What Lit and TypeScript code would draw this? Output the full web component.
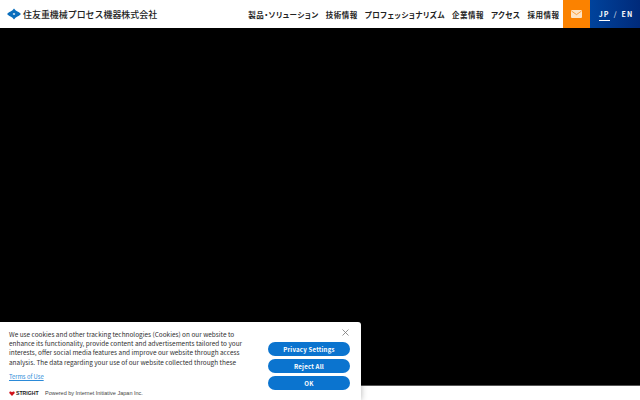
import { LitElement, html, css } from "lit";
import { customElement } from "lit/decorators.js";

const NAV = ["製品・ソリューション", "技術情報", "プロフェッショナリズム", "企業情報", "アクセス", "採用情報"];

@customElement("app-root")
export class AppRoot extends LitElement {
  static styles = css`
    :host { display: block; position: relative; width: 640px; height: 400px; overflow: hidden; background: #fff;
      font-family: "Noto Sans CJK JP", "Noto Sans", sans-serif; }
    .page { display: flex; flex-direction: column; height: 400px; }
    header { height: 28px; display: flex; align-items: center; background: #fff; flex: none; }
    .logo { display: flex; align-items: center; gap: 2px; padding-left: 7px; }
    .logo svg { display: block; }
    .logo span { font-size: 8.95px; font-weight: 500; color: #222; white-space: nowrap; }
    nav { margin-left: auto; display: flex; gap: 7px; padding-right: 3.5px; }
    nav span { font-size: 7.5px; font-weight: 700; color: #222; letter-spacing: 0.5px; font-feature-settings: "palt"; white-space: nowrap; }
    .mail { width: 27px; height: 28px; background: #fb8200; display: flex; align-items: center; justify-content: center; }
    .lang { width: 50px; height: 28px; padding-left: 2px; box-sizing: border-box; background: linear-gradient(90deg, #00439c, #002a7a); color: #fff;
      display: flex; align-items: center; justify-content: center; gap: 4px; font-size: 7px; font-weight: 700; letter-spacing: 1.1px; }
    .lang .jp { border-bottom: 1px solid #fff; line-height: 10px; padding-bottom: 1px; margin-top: 1px; }
    .lang .en { margin-bottom: 1px; }
    .lang .sl { font-weight: 400; margin-bottom: 1px; }
    .hero { height: 358px; background: #000; flex: none; }
    .rest { flex: 1; border-top: 1px solid #555; margin-top: -1px; background: #fff; }
    .cookie { position: absolute; left: 0; top: 322px; width: 361px; height: 78px; background: #fff;
      box-shadow: 0 0 6px rgba(0,0,0,.3); border-top-right-radius: 3px; display: flex; }
    .left { width: 258px; padding: 8px 0 0 9px; box-sizing: border-box; flex: none; }
    .left p { margin: 0; font-size: 6.44px; line-height: 9.2px; font-weight: 400; color: #333; white-space: pre; height: 37px; }
    .terms { display: block; margin-top: 5px; font-size: 5.8px; line-height: 9px; color: #2b8ad8; text-decoration: underline; }
    .brand { display: flex; align-items: center; margin-top: 8px; height: 8px; }
    .brand svg { display: block; margin-right: 1px; }
    .stright { font-family: "Liberation Sans", sans-serif; font-size: 5.15px; font-weight: 700; color: #222; width: 29px; }
    .powered { font-family: "Liberation Sans", sans-serif; font-size: 5.5px; color: #444; white-space: nowrap; }
    .right { position: relative; flex: 1; display: flex; flex-direction: column; gap: 3px; padding: 20px 11px 0 10px; }
    .btn { height: 14px; border-radius: 7px; background: #0b74cf; color: #fff; font-size: 6.1px; font-weight: 700;
      display: flex; align-items: center; justify-content: center; letter-spacing: 0.2px; }
    .close { position: absolute; top: 7px; right: 12px; display: block; }
  `;

  render() {
    return html`
      <div class="page">
        <header>
          <div class="logo">
            <svg width="14" height="12" viewBox="0 0 14 12">
              <path d="M7 0.5 Q8.5 2.6 10 3.2 Q12 4 14 6 Q12 8 10 8.8 Q8.5 9.4 7 11.5 Q5.5 9.4 4 8.8 Q2 8 0 6 Q2 4 4 3.2 Q5.5 2.6 7 0.5 Z" fill="#0a6ebd"/>
              <path d="M5.6 6 L7 5 L8.4 6 L7 7 Z" fill="#fff"/>
            </svg>
            <span>住友重機械プロセス機器株式会社</span>
          </div>
          <nav>${NAV.map((n) => html`<span>${n}</span>`)}</nav>
          <div class="mail">
            <svg width="11" height="8" viewBox="0 0 11 8">
              <rect width="11" height="8" rx="1" fill="#fde3c4"/>
              <path d="M0.5 1 L5.5 4.6 L10.5 1" fill="none" stroke="#fb8200" stroke-width="0.7"/>
            </svg>
          </div>
          <div class="lang"><span class="jp">JP</span><span class="sl">/</span><span class="en">EN</span></div>
        </header>
        <div class="hero"></div>
        <div class="rest"></div>
      </div>
      <div class="cookie">
        <div class="left">
          <p>We use cookies and other tracking technologies (Cookies) on our website to
enhance its functionality, provide content and advertisements tailored to your
interests, offer social media features and improve our website through access
analysis. The data regarding your use of our website collected through these</p>
          <span class="terms">Terms of Use</span>
          <div class="brand">
            <svg width="6" height="5" viewBox="0 0 7 6"><path d="M3.5 6 L0.4 2.6 C-0.4 1 1.8 -0.6 3.5 1.4 C5.2 -0.6 7.4 1 6.6 2.6 Z" fill="#d0121b"/></svg>
            <span class="stright">STRIGHT</span>
            <span class="powered">Powered by Internet Initiative Japan Inc.</span>
          </div>
        </div>
        <div class="right">
          <svg class="close" width="7" height="7" viewBox="0 0 7 7"><path d="M0.5 0.5 L6.5 6.5 M6.5 0.5 L0.5 6.5" stroke="#777" stroke-width="0.8"/></svg>
          <div class="btn">Privacy Settings</div>
          <div class="btn">Reject All</div>
          <div class="btn">OK</div>
        </div>
      </div>
    `;
  }
}
